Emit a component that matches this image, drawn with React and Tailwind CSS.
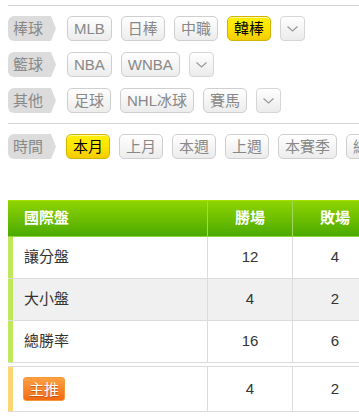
import React from "react";

const font = { fontFamily: '"Liberation Sans", "Noto Sans CJK TC", sans-serif' };

function Label({ children }) {
  return (
    <div className="flex h-[25px] shrink-0 items-stretch">
      <div className="flex items-center rounded-l-[6px] bg-[#dcdcdc] pl-[5px] pr-[6px] text-[15px] leading-none text-[#888]">
        {children}
      </div>
      <svg width="7" height="25" viewBox="0 0 7 25" className="block">
        <polygon points="0,0 2,0 7,12.5 2,25 0,25" fill="#dcdcdc" />
      </svg>
    </div>
  );
}

function Btn({ children, active }) {
  if (active) {
    return (
      <div className="flex h-[25px] shrink-0 items-center rounded-[5px] border border-[#d2b400] bg-gradient-to-b from-[#fff000] via-[#ffe400] to-[#f2cc00] px-[6px] text-[15px] leading-none text-black shadow-[inset_0_1px_0_rgba(255,255,200,0.8)]">
        {children}
      </div>
    );
  }
  return (
    <div className="flex h-[25px] shrink-0 items-center rounded-[5px] border border-[#cfcfcf] bg-gradient-to-b from-white to-[#ececec] px-[6px] text-[15px] leading-none text-[#888]">
      {children}
    </div>
  );
}

function Drop() {
  return (
    <div className="flex h-[25px] w-[25px] shrink-0 items-center justify-center rounded-[4px] border border-[#d6d6d6] bg-gradient-to-b from-white to-[#ebebeb]">
      <svg width="11" height="6" viewBox="0 0 11 6">
        <polyline points="0.5,0.5 5.5,5 10.5,0.5" fill="none" stroke="#999" strokeWidth="1.2" />
      </svg>
    </div>
  );
}

function Row({ label, children }) {
  return (
    <div className="flex items-center">
      <Label>{label}</Label>
      <div className="ml-[11px] flex items-center gap-[9px]">{children}</div>
    </div>
  );
}

export default function App() {
  return (
    <div className="relative h-[418px] w-[359px] overflow-hidden bg-white" style={font}>
      <div className="ml-2 mt-[5px] w-[600px] border-t border-[#d4d4d4]" />
      <div className="ml-2 flex flex-col gap-[11px] pt-[10px]">
        <Row label="棒球">
          <Btn>MLB</Btn>
          <Btn>日棒</Btn>
          <Btn>中職</Btn>
          <Btn active>韓棒</Btn>
          <Drop />
        </Row>
        <Row label="籃球">
          <Btn>NBA</Btn>
          <Btn>WNBA</Btn>
          <Drop />
        </Row>
        <Row label="其他">
          <Btn>足球</Btn>
          <Btn>NHL冰球</Btn>
          <Btn>賽馬</Btn>
          <Drop />
        </Row>
      </div>
      <div className="ml-2 mt-[10px] w-[600px] border-t border-[#d4d4d4]" />
      <div className="ml-2 mt-[10px] flex w-[600px] items-center">
        <Label>時間</Label>
        <div className="ml-[10px] flex items-center gap-[9px]">
          <Btn active>本月</Btn>
          <Btn>上月</Btn>
          <Btn>本週</Btn>
          <Btn>上週</Btn>
          <Btn>本賽季</Btn>
          <Btn>總計</Btn>
        </div>
      </div>

      {/* main table */}
      <div className="ml-2 mt-[41px] w-[600px] text-[15px]">
        <div className="flex h-[37px] border-t border-[#a6e000] border-b border-b-[#8fd63a] bg-gradient-to-b from-[#8ed400] to-[#4aaa00] font-bold text-white">
          <div className="flex w-[199px] items-center pl-[16px]">國際盤</div>
          <div className="flex w-[85px] items-center justify-center border-l border-[#9fd85a]">勝場</div>
          <div className="flex w-[85px] items-center justify-center border-l border-[#9fd85a]">敗場</div>
          <div className="flex w-[85px] items-center justify-center border-l border-[#9fd85a]"></div>
        </div>
        {[
          ["讓分盤", "12", "4", "bg-white"],
          ["大小盤", "4", "2", "bg-[#f0f0f0]"],
          ["總勝率", "16", "6", "bg-white"],
        ].map(([name, w, l, bg]) => (
          <div key={name} className={`flex h-[42px] border-b border-[#dcdcdc] text-[#333] ${bg}`}>
            <div className="flex w-[199px] items-center border-l-[5px] border-[#bfe85c] pl-[11px]">{name}</div>
            <div className="flex w-[85px] items-center justify-center border-l border-[#dcdcdc]">{w}</div>
            <div className="flex w-[85px] items-center justify-center border-l border-[#dcdcdc]">{l}</div>
            <div className="flex w-[85px] items-center justify-center border-l border-[#dcdcdc]"></div>
          </div>
        ))}
      </div>

      {/* recommend table */}
      <div className="ml-2 mt-[3px] w-[600px] text-[15px] text-[#333]">
        <div className="flex h-[46px] border-y border-[#dcdcdc] bg-white">
          <div className="flex w-[199px] items-center border-l-[5px] border-[#ffd574] pl-[10px]">
            <div className="flex h-[24px] items-center rounded-[3px] border border-[#f39a3a] bg-gradient-to-b from-[#ffa040] to-[#f26a10] px-[5px] text-[15px] leading-none text-white [text-shadow:0_1px_1px_rgba(150,60,0,0.6)]">
              主推
            </div>
          </div>
          <div className="flex w-[85px] items-center justify-center border-l border-[#dcdcdc]">4</div>
          <div className="flex w-[85px] items-center justify-center border-l border-[#dcdcdc]">2</div>
          <div className="flex w-[85px] items-center justify-center border-l border-[#dcdcdc]"></div>
        </div>
      </div>
    </div>
  );
}
